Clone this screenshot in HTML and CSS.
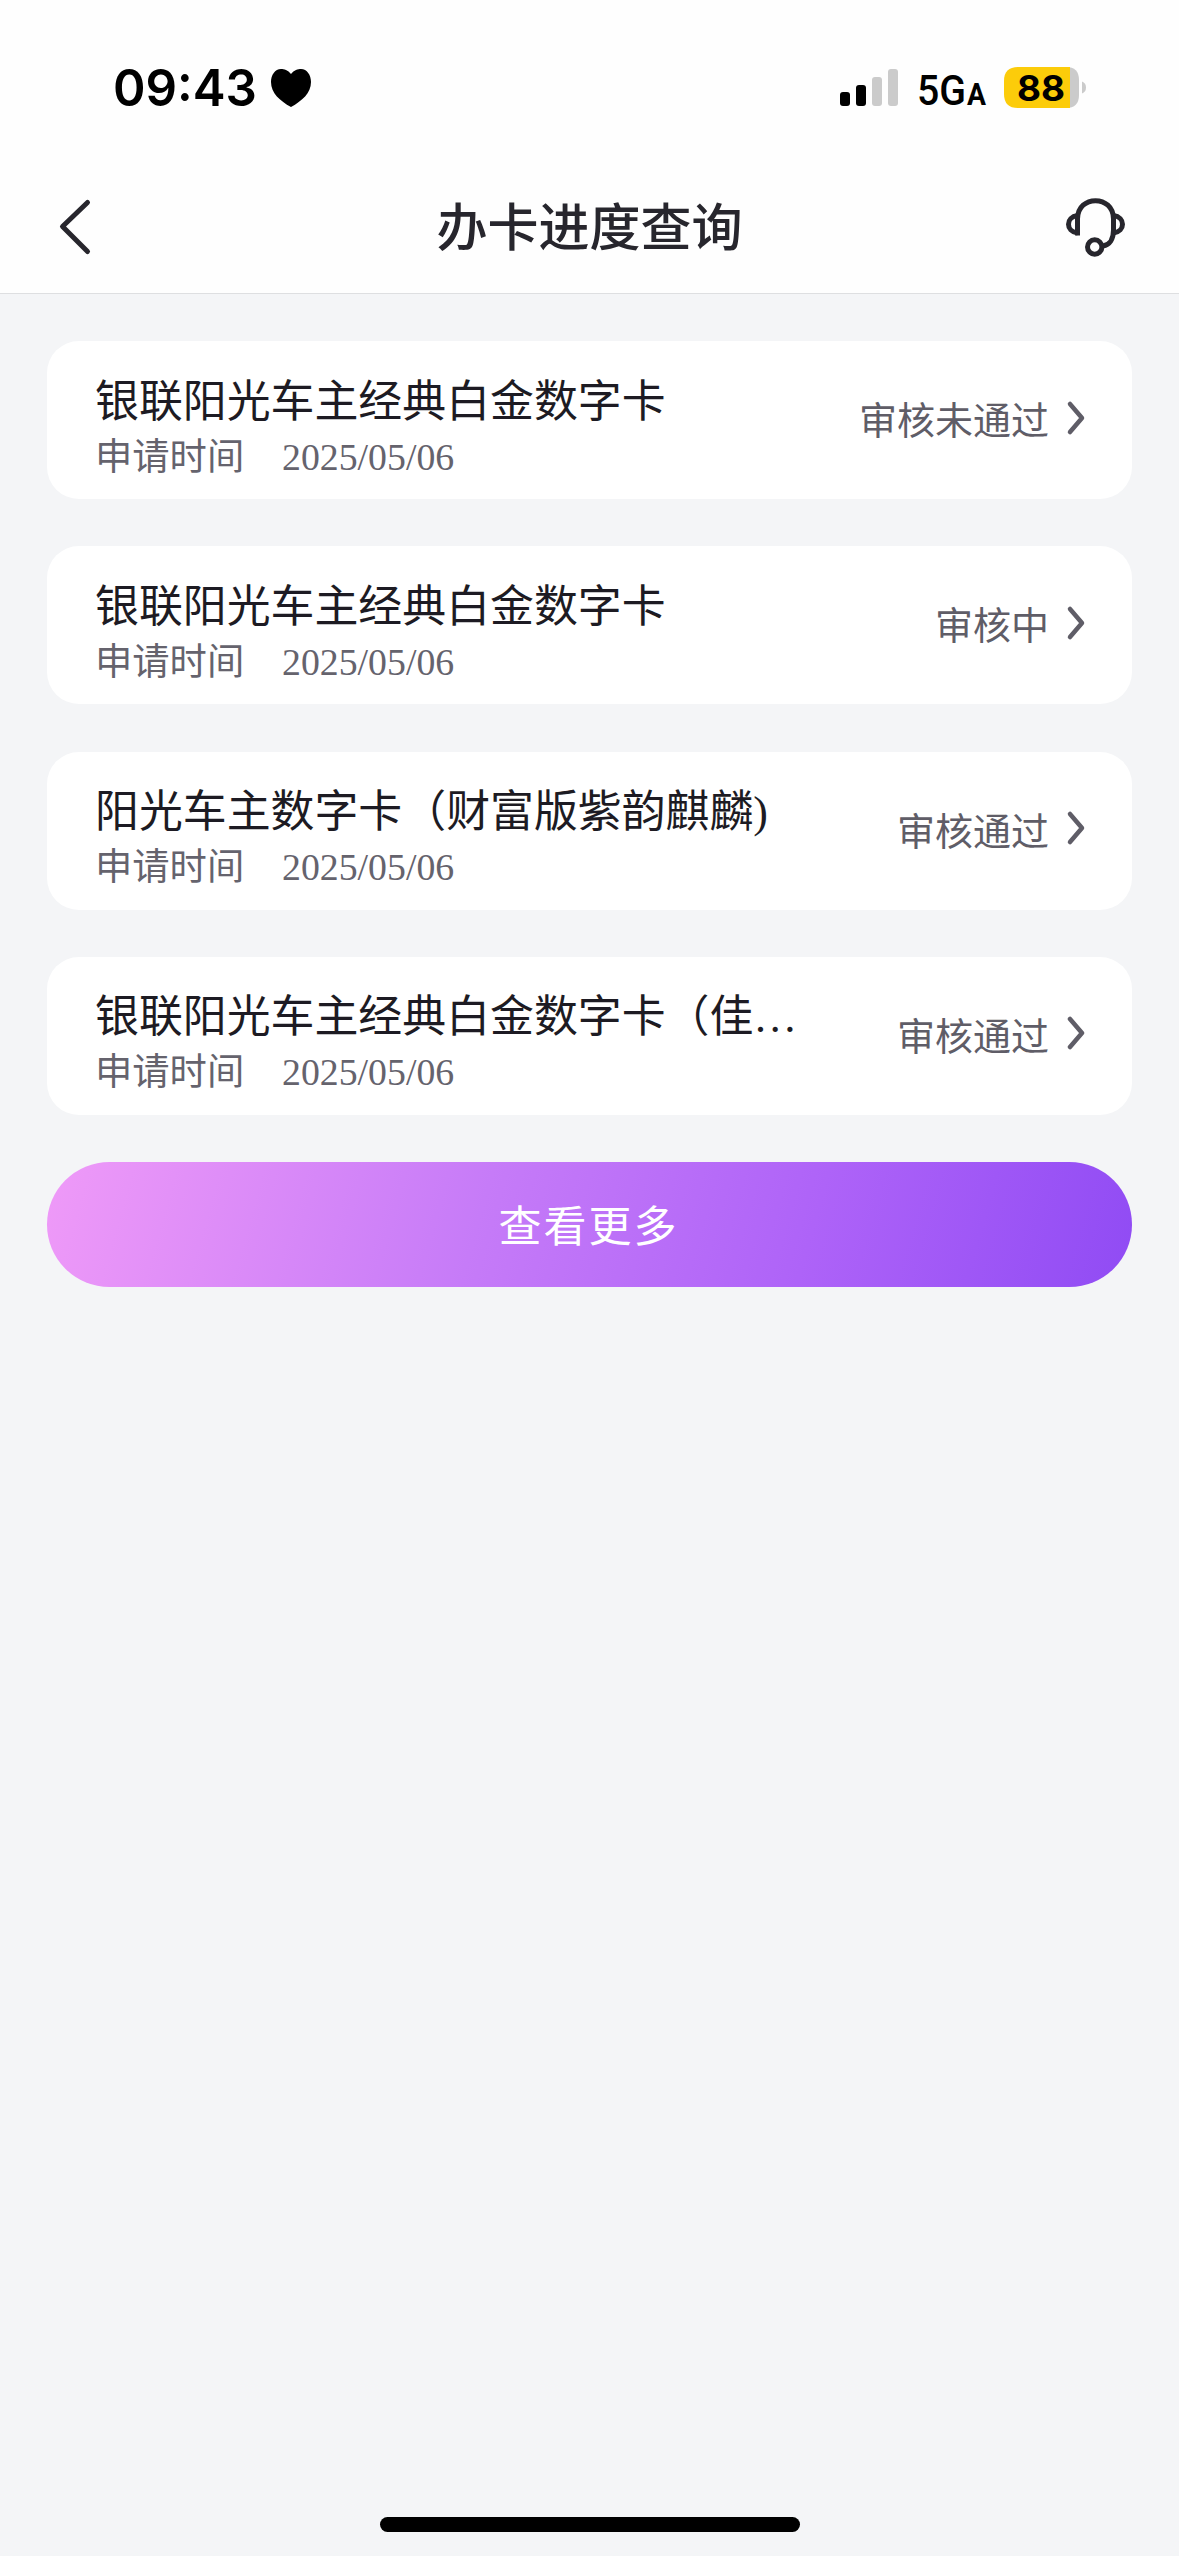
FILE: index.html
```
<!DOCTYPE html>
<html lang="zh-CN">
<head>
<meta charset="utf-8">
<title>办卡进度查询</title>
<link rel="stylesheet" href="styles.css">
</head>
<body>
<div class="screen">
  <header class="header">
    <div class="status-bar">
      <svg class="clock" width="210" height="80" viewBox="-10 -10 210 80">
        <text class="clock-text" x="-2" y="46" textLength="144" lengthAdjust="spacingAndGlyphs">09:43</text>
        <path d="M176 14C173 10 169 9 166 9C160 9 156 15 156 22C156 33 165 41 176 47C187 41 196 33 196 22C196 15 192 9 186 9C183 9 179 10 176 14Z"/>
      </svg>
      <svg class="indicators" width="250" height="80" viewBox="0 -10 250 80">
        <rect x="0" y="32" width="10" height="14" rx="3"/>
        <rect x="16" y="25" width="10" height="21" rx="3"/>
        <g fill="#cbcbcb">
          <rect x="32" y="17" width="10" height="29" rx="3"/>
          <rect x="48" y="9" width="10" height="37" rx="3"/>
        </g>
        <text class="network" x="77" y="44.500" textLength="49" lengthAdjust="spacingAndGlyphs">5G</text>
        <text class="network-sub" x="127" y="44.500" textLength="19" lengthAdjust="spacingAndGlyphs">A</text>
        <path fill="#cbcbcb" d="M224 7H226Q239 7 239 20V35Q239 48 226 48H224Z"/>
        <path fill="#fccc0a" d="M230 7H178Q164 7 164 21V34Q164 48 178 48H230Z"/>
        <path fill="#cbcbcb" d="M242 21.500Q246 23 246 27.500Q246 32 242 33.500Z"/>
        <text class="battery-level" x="177" y="40.500" textLength="48" lengthAdjust="spacingAndGlyphs">88</text>
      </svg>
    </div>
    <nav class="nav">
      <svg class="nav-icon" width="80" height="80" viewBox="0 0 80 80">
        <path d="M53 16L28 40L53 65" transform="translate(-0.500 -0.500)"/>
      </svg>
      <h1 class="nav-title">办卡进度查询</h1>
      <svg class="nav-icon headset" width="80" height="80" viewBox="0 0 80 80">
        <path d="M22.500 48.500V32C22.500 7.500 58.500 7.500 58.500 32V43C58.500 52 54.500 58 48 59"/>
        <path d="M22.500 28.500C10.500 30 10.500 44.500 22.500 46M58.500 28.500C70.500 30 70.500 44.500 58.500 46"/>
        <circle cx="39.700" cy="60" r="7.200"/>
      </svg>
    </nav>
  </header>
  <main class="list">
    <a class="card">
      <div class="info">
        <h2 class="name">银联阳光车主经典白金数字卡</h2>
        <p class="meta"><span class="label">申请时间</span><time>2025/05/06</time></p>
      </div>
      <span class="state">审核未通过</span>
      <svg class="arrow" width="20" height="36" viewBox="0 0 20 36"><path d="M4 4L16 18L4 32"/></svg>
    </a>
    <a class="card">
      <div class="info">
        <h2 class="name">银联阳光车主经典白金数字卡</h2>
        <p class="meta"><span class="label">申请时间</span><time>2025/05/06</time></p>
      </div>
      <span class="state">审核中</span>
      <svg class="arrow" width="20" height="36" viewBox="0 0 20 36"><path d="M4 4L16 18L4 32"/></svg>
    </a>
    <a class="card">
      <div class="info">
        <h2 class="name">阳光车主数字卡（财富版紫韵麒麟)</h2>
        <p class="meta"><span class="label">申请时间</span><time>2025/05/06</time></p>
      </div>
      <span class="state">审核通过</span>
      <svg class="arrow" width="20" height="36" viewBox="0 0 20 36"><path d="M4 4L16 18L4 32"/></svg>
    </a>
    <a class="card">
      <div class="info">
        <h2 class="name">银联阳光车主经典白金数字卡（佳…</h2>
        <p class="meta"><span class="label">申请时间</span><time>2025/05/06</time></p>
      </div>
      <span class="state">审核通过</span>
      <svg class="arrow" width="20" height="36" viewBox="0 0 20 36"><path d="M4 4L16 18L4 32"/></svg>
    </a>
    <button class="more">查看更多</button>
  </main>
  <div class="home-indicator"></div>
</div>
</body>
</html>
```
FILE: styles.css
```
* {
  box-sizing: border-box;
}

body,
h1,
h2,
p {
  margin: 0;
  font-weight: 400;
}

body {
  background: #f4f5f7;
  font-family: "Liberation Serif", "Noto Sans CJK SC", serif;
}

.screen {
  display: flex;
  flex-direction: column;
  height: 2556px;
}

.header {
  height: 294px;
  background: #fefefe;
  border-bottom: 1px solid #dedfe1;
}

.status-bar {
  display: flex;
  justify-content: space-between;
  height: 161px;
  padding: 50px 89px 0 105px;
}

.clock-text {
  font: 600 51px Inter, sans-serif;
}

.network {
  font: 500 42px Roboto, sans-serif;
}

.network-sub {
  font: 700 32px Roboto, sans-serif;
}

.battery-level {
  font: 700 36px Inter, sans-serif;
}

.nav {
  display: flex;
  align-items: center;
  justify-content: space-between;
  height: 132px;
  padding: 0 44px 0 35px;
}

.nav-title {
  padding: 0 0 6px 9px;
  color: #27262d;
  font: 500 51px/76px "Noto Sans CJK SC", sans-serif;
}

.nav-icon {
  fill: none;
  stroke: #27262d;
  stroke-width: 5;
  stroke-linecap: round;
  stroke-linejoin: round;
}

.headset {
  stroke-linecap: butt;
}

.list {
  display: flex;
  flex-direction: column;
  gap: 47.3px;
  padding: 47px 47px 0;
}

.card {
  display: flex;
  align-items: center;
  height: 158px;
  padding: 0 46px 0 48px;
  border-radius: 32px;
  background: #fff;
}

.info {
  flex: 1;
  min-width: 0;
  padding-top: 16px;
}

.name {
  color: #1d1b23;
  font-size: 43.900px;
  line-height: 58px;
  white-space: nowrap;
}

.meta {
  display: flex;
  align-items: baseline;
  color: #65636d;
  font-size: 37.800px;
  line-height: 53px;
}

.label {
  width: 187px;
  font-size: 37.300px;
}

.state {
  padding-top: 2px;
  color: #5f5d67;
  font-size: 38px;
  line-height: 54px;
}

.arrow {
  margin: 0 0 5px 17px;
  fill: none;
  stroke: #5f5d67;
  stroke-width: 4.500;
  stroke-linecap: round;
  stroke-linejoin: round;
}

.more {
  height: 125px;
  padding: 0 2px 4px 0;
  border: 0;
  border-radius: 63px;
  background: linear-gradient(106deg, #ef9af8 0%, #c67bf8 40%, #ae63f8 70%, #904bf4 100%);
  color: #fff;
  font: 400 43px/64px "Noto Sans CJK SC", sans-serif;
  letter-spacing: 2px;
}

.home-indicator {
  width: 420px;
  height: 15px;
  margin: auto auto 24px;
  border-radius: 8px;
  background: #000;
}
```
